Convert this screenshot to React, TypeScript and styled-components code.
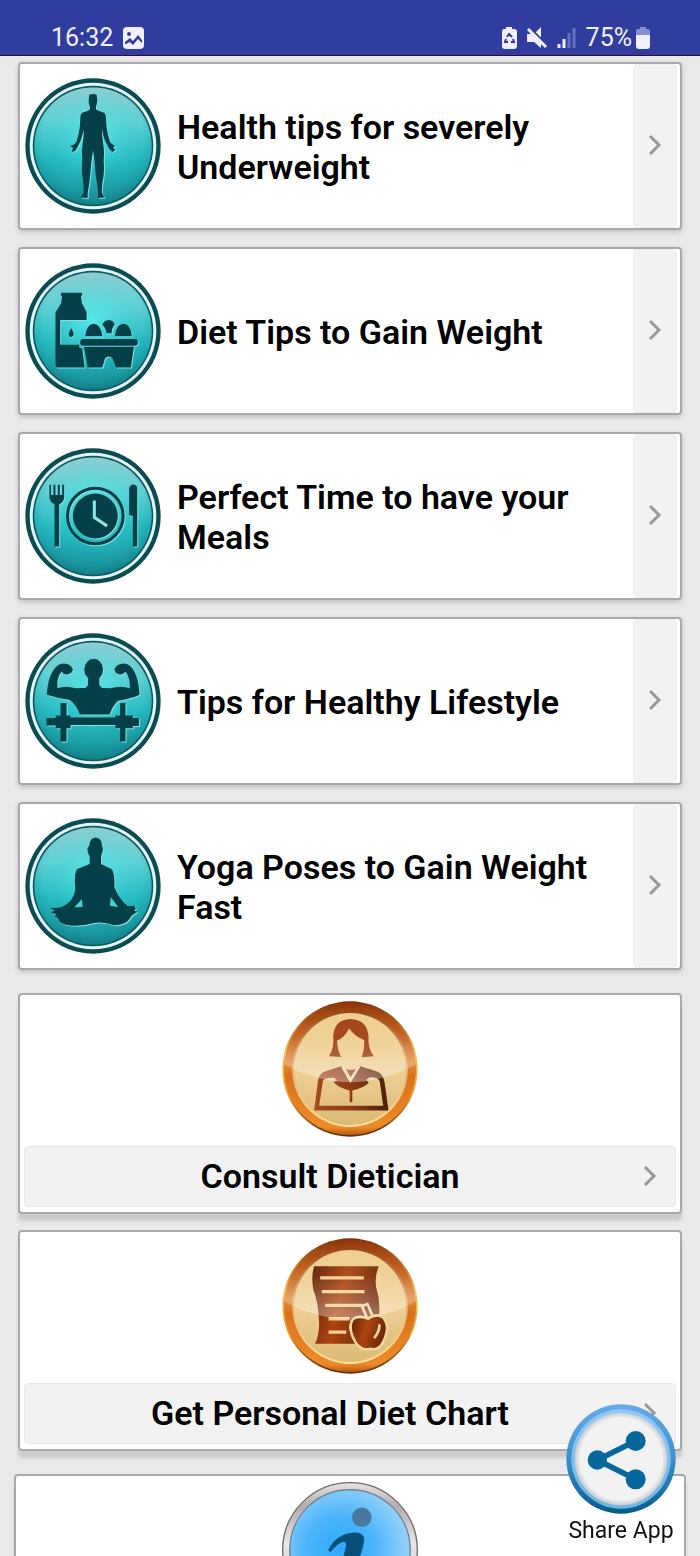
import React, { useId } from "react";
import styled, { createGlobalStyle } from "styled-components";

const GlobalStyle = createGlobalStyle`
  *, *::before, *::after { box-sizing: border-box; }
  body {
    margin: 0;
    background: #e9e9ea;
    color: #000;
    font-family: Roboto, "Noto Sans", sans-serif;
  }
`;

const Screen = styled.div`
  display: flex;
  flex-direction: column;
  height: 100vh;
  overflow: hidden;
`;

const StatusBar = styled.header`
  display: flex;
  flex: none;
  align-items: center;
  justify-content: space-between;
  height: 56px;
  padding: 20px 49px 0 51px;
  border-bottom: 1px solid #3a0a30;
  background: #303d9e;
  color: #f0f0ff;
  font-size: 25px;
  line-height: 36px;
`;

const StatusGroup = styled.div<{ $gap: number }>`
  display: flex;
  align-items: center;
  gap: ${(p) => p.$gap}px;
`;

const BatteryLevel = styled.span`
  display: flex;
  align-items: center;
  gap: 3px;
`;

const Content = styled.main`
  flex: 1;
  min-height: 0;
  padding: 6px 18px 0;
  overflow-y: auto;
  scrollbar-width: none;
`;

const CardList = styled.nav<{ $gap: number }>`
  display: flex;
  flex-direction: column;
  gap: ${(p) => p.$gap}px;
  margin-bottom: 23px;
`;

const Card = styled.a`
  display: flex;
  border: 2px solid #a8a9ae;
  border-radius: 4px;
  background: #fff;
  color: inherit;
  text-decoration: none;
`;

const TopicCard = styled(Card)`
  align-items: center;
  min-height: 168px;
  padding: 0 3px 0 5px;
  box-shadow: 0 2px 5px rgba(0, 0, 0, 0.18);
`;

const TopicTitle = styled.span`
  flex: 1;
  padding: 2px 16px 0;
  font-size: 34px;
  font-weight: 600;
  line-height: 40px;
`;

const ArrowCell = styled.span`
  display: flex;
  align-self: stretch;
  align-items: center;
  justify-content: center;
  width: 44px;
  padding-bottom: 2px;
  border: 1px solid #eeeef0;
  border-radius: 4px;
  background: #f2f2f2;
`;

const ServiceCard = styled(Card)`
  flex-direction: column;
  align-items: center;
  gap: 9px;
  min-height: 221px;
  padding: 6px 4px 5px;
  box-shadow: 0 7px 3px rgba(0, 0, 0, 0.12);
`;

const ServiceBar = styled.span`
  display: flex;
  align-items: center;
  align-self: stretch;
  height: 61px;
  padding: 0 18px 2px 0;
  border: 1px solid #e9e9eb;
  border-radius: 4px;
  background: #f2f2f2;
`;

const ServiceTitle = styled.span`
  flex: 1;
  padding-right: 8px;
  font-size: 34px;
  font-weight: 600;
  line-height: 40px;
  text-align: center;
`;

const InfoCard = styled(ServiceCard)`
  margin: 0 -4px;
`;

const BadgeSvg = styled.svg`
  display: block;
  flex: none;
  width: 136px;
  height: 136px;
`;

const Silhouette = styled.g`
  fill: #053f47;
  filter: drop-shadow(3px 3px 0 #7fe3e3);
`;

const ShareButton = styled.button`
  position: fixed;
  right: 24px;
  bottom: 11px;
  display: flex;
  flex-direction: column;
  align-items: center;
  padding: 0;
  border: 0;
  background: none;
  color: #111;
  font-family: inherit;
  font-size: 23px;
  line-height: 28px;
  cursor: pointer;
`;

const ShareIcon = styled.svg`
  display: block;
  width: 110px;
  height: 110px;
  margin-bottom: 3px;
`;

function Chevron() {
  return (
    <svg width="14" height="22" viewBox="0 0 14 22" aria-hidden="true">
      <path d="M2 2L11 11L2 20" fill="none" stroke="#999" strokeWidth="3" />
    </svg>
  );
}

type BadgeProps = { children: React.ReactNode };

function TealBadge({ children }: BadgeProps) {
  const id = useId();
  return (
    <BadgeSvg viewBox="44 68 406 406" aria-hidden="true">
      <defs>
        <linearGradient id={id + "v"} x1="0" y1="0" x2="0" y2="1">
          <stop offset="0" stopColor="#a8cfd3" />
          <stop offset="0.3" stopColor="#6ad3d7" />
          <stop offset="0.6" stopColor="#22b7bd" />
          <stop offset="1" stopColor="#14858e" />
        </linearGradient>
        <radialGradient id={id + "g"} cx="0.5" cy="0.42" r="0.6">
          <stop offset="0" stopColor="#58f2f3" stopOpacity="0.75" />
          <stop offset="0.7" stopColor="#2cc6ca" stopOpacity="0.2" />
          <stop offset="1" stopColor="#0d6b75" stopOpacity="0.5" />
        </radialGradient>
      </defs>
      <circle cx="247" cy="271" r="202" fill="#0b4b52" />
      <circle cx="247" cy="271" r="189" fill="#e2f5fa" />
      <circle cx="247" cy="271" r="180" fill="#0b5961" />
      <circle cx="247" cy="271" r="175" fill={`url(#${id}v)`} />
      <circle cx="247" cy="271" r="175" fill={`url(#${id}g)`} />
      <Silhouette>{children}</Silhouette>
    </BadgeSvg>
  );
}

function BodyGlyph() {
  return (
    <path
      transform="translate(0 14)"
      d="M236 104Q247 99 258 104L260 122Q258 134 256 139L256 148Q266 154 280 158Q286 162 286 178L288 205Q291 225 298 245L304 252L314 257L307 259L313 270L305 275Q295 268 291 256Q280 240 277 222L274 208Q273 225 277 245Q282 270 279 300Q281 330 278 350Q272 380 274 397L281 411L262 412Q263 395 260 375Q254 345 253 320Q251 290 247 270Q244 290 241 315Q239 345 235 375Q230 395 231 412L210 411L219 397Q220 380 216 350Q212 330 215 300Q212 270 217 245Q221 225 219 208L216 222Q212 240 203 256L194 272L184 275L187 262L179 257L192 252L198 243Q204 225 207 205Q209 190 209 178Q209 162 215 158Q230 154 238 148L238 139Q234 132 234 122Z"
    />
  );
}

function FoodGlyph() {
  return (
    <>
      <path d="M153 157H213Q217 162 213 167H211L214 188L228 214V238H149V312H206V320L215 324L222 380H142Q135 380 135 370V216L152 188L155 167H153Q149 162 153 157Z" />
      <path d="M182 262Q172 278 176 285Q182 293 188 285Q192 278 182 262Z" />
      <path d="M224 287Q227 250 249 249Q271 250 275 287Z" />
      <path d="M312 287Q316 250 338 249Q360 250 363 287Z" />
      <path d="M275 252Q280 239 294 238Q308 239 312 252Q302 262 303 278H287Q286 262 275 252Z" />
      <rect x="209" y="295" width="172" height="20" rx="9" />
      <path d="M220 318H369L360 380H316L305 352Q294 342 283 352L275 380H232Z" />
    </>
  );
}

function MealTimeGlyph() {
  return (
    <>
      <path d="M117 178H122V208H129V178H135V208H142V178H148V208H155V178H161V214Q161 228 146 236V362H132V236Q117 228 117 214Z" />
      <circle cx="254" cy="271" r="83" fill="none" stroke="#053f47" strokeWidth="9" />
      <circle cx="254" cy="271" r="67" />
      <path d="M251 225V275L289 301" fill="none" stroke="#8be9ea" strokeWidth="9" />
      <path d="M355 188Q358 177 368 177Q379 178 379 190V362H366V272L355 268Z" />
    </>
  );
}

function FitnessGlyph() {
  return (
    <>
      <ellipse cx="249" cy="177" rx="28" ry="32" />
      <path d="M109 252Q112 205 128 180Q142 158 160 159Q180 160 187 176Q186 188 172 191Q162 194 153 184Q138 200 141 233Q165 224 195 233L224 232L232 224V195H266V224L274 232L300 233Q330 224 357 233Q358 200 344 184Q335 194 325 191Q312 188 311 176Q318 160 338 159Q358 160 370 182Q384 208 386 252Q360 264 322 270Q305 285 297 311H208Q195 280 178 268Q140 262 109 252Z" />
      <path d="M108 322H136V314H150V277H168V314H180V320H314V314H328V277H344V314H366V322H384V346H366V352H344V392H328V352H314V343H180V352H168V392H150V352H136V344H108Z" />
    </>
  );
}

function YogaGlyph() {
  return (
    <>
      <path d="M236 150Q237 127 255 126Q273 127 274 150L277 162Q274 175 271 182V205Q285 212 302 220Q312 228 311 275Q324 308 350 331L370 330L375 338L370 345L380 348L362 360Q352 378 340 382Q322 390 308 388Q280 378 255 381Q225 389 195 390Q160 390 148 378Q144 366 132 362L137 357L122 350L132 345L120 337L145 336Q165 332 182 313Q196 290 194 275Q190 230 200 220Q225 210 237 205V182Q231 175 230 160Z" />
      <path d="M214 310L216 333L191 335Z" fill="#45d5d8" />
      <path d="M300 304L298 330L322 334Z" fill="#45d5d8" />
    </>
  );
}

function AmberBadge({ children }: BadgeProps) {
  const id = useId();
  return (
    <BadgeSvg viewBox="66 48 406 406" aria-hidden="true">
      <defs>
        <linearGradient id={id + "r"} x1="0" y1="0" x2="0" y2="1">
          <stop offset="0" stopColor="#8d3508" />
          <stop offset="0.2" stopColor="#bd5514" />
          <stop offset="0.45" stopColor="#e38b42" />
          <stop offset="0.55" stopColor="#d9711c" />
          <stop offset="0.94" stopColor="#ee8b29" />
          <stop offset="1" stopColor="#b85a12" />
        </linearGradient>
        <linearGradient id={id + "e"} x1="0" y1="0" x2="0" y2="1">
          <stop offset="0" stopColor="#7b2e08" />
          <stop offset="0.4" stopColor="#f4c343" />
          <stop offset="0.7" stopColor="#ef9b2b" />
          <stop offset="1" stopColor="#5e2a08" />
        </linearGradient>
        <linearGradient id={id + "f"} x1="0" y1="0" x2="0" y2="1">
          <stop offset="0" stopColor="#efcd8b" />
          <stop offset="0.5" stopColor="#efd096" />
          <stop offset="1" stopColor="#dcb975" />
        </linearGradient>
        <linearGradient id={id + "b"} x1="0" y1="0" x2="0" y2="1">
          <stop offset="0" stopColor="#8e4414" />
          <stop offset="0.4" stopColor="#dca868" />
          <stop offset="1" stopColor="#ffe297" />
        </linearGradient>
        <linearGradient id={id + "s"} x1="0" y1="0" x2="0" y2="1">
          <stop offset="0" stopColor="#fff" stopOpacity="0" />
          <stop offset="0.5" stopColor="#fff" stopOpacity="0.06" />
          <stop offset="1" stopColor="#fff" stopOpacity="0.36" />
        </linearGradient>
      </defs>
      <circle cx="269" cy="251" r="202" fill={`url(#${id}e)`} />
      <circle cx="269" cy="251" r="197" fill={`url(#${id}r)`} />
      <circle cx="269" cy="251" r="173" fill={`url(#${id}b)`} />
      <circle cx="269" cy="251" r="167" fill={`url(#${id}f)`} />
      {children}
      <path
        d="M72 237A197 197 0 0 1 466 237Q370 290 269 290Q168 290 72 237Z"
        fill={`url(#${id}s)`}
      />
    </BadgeSvg>
  );
}

function DieticianGlyph() {
  const id = useId();
  return (
    <>
      <defs>
        <linearGradient id={id + "d"} x1="0" y1="0" x2="1" y2="0">
          <stop offset="0" stopColor="#a8481c" />
          <stop offset="0.5" stopColor="#8f3c16" />
          <stop offset="1" stopColor="#482008" />
        </linearGradient>
      </defs>
      <path
        d="M206 213Q222 190 219 150Q224 104 270 102Q318 104 324 150Q322 190 340 213L304 216Q313 190 312 165Q285 155 266 130Q252 158 230 167Q232 195 242 215Z"
        fill="#a24012"
      />
      <path
        fillRule="evenodd"
        d="M162 375L174 282Q178 262 200 256L244 243L270 290L299 243L346 257Q368 264 372 290L384 375ZM177 361L188 287Q190 276 222 277L230 285L220 290Q235 308 268 315V350H276V315Q310 308 325 292L317 283L329 276Q355 275 358 290L368 361Z"
        fill={`url(#${id}d)`}
      />
      <path d="M257 251Q271 257 287 251L271 276Z" fill="#9a421a" />
      <path d="M246 244L270 286L296 244" fill="none" stroke="#f3dcae" strokeWidth="7" />
    </>
  );
}

function DietChartGlyph() {
  const id = useId();
  return (
    <g transform="translate(0 9)">
      <defs>
        <linearGradient id={id + "p"} x1="0" y1="0" x2="1" y2="0.3">
          <stop offset="0" stopColor="#5e1e05" />
          <stop offset="0.5" stopColor="#ac4510" />
          <stop offset="1" stopColor="#6e2608" />
        </linearGradient>
      </defs>
      <path
        d="M162 123H355Q342 155 347 185Q362 235 354 280L290 355H165Q180 320 176 280Q174 230 160 195Q152 155 162 123Z"
        fill={`url(#${id}p)`}
      />
      <path
        d="M180 158H310M185 199H312M195 240H310M205 280H268M205 320H258"
        stroke="#f3cf92"
        strokeWidth="10"
      />
      <path d="M311 236L327 272" stroke="#f3d49a" strokeWidth="26" />
      <path d="M315 243L327 272" stroke="#85300b" strokeWidth="9" />
      <path
        d="M323 280Q348 262 368 276Q390 302 370 345Q355 378 330 370Q302 378 285 350Q262 310 275 285Q292 266 323 280Z"
        fill={`url(#${id}p)`}
        stroke="#f3d49a"
        strokeWidth="8"
      />
      <path
        d="M357 300Q356 320 343 335"
        fill="none"
        stroke="#f3d49a"
        strokeWidth="8"
        strokeLinecap="round"
      />
    </g>
  );
}

function InfoBadge() {
  const id = useId();
  return (
    <BadgeSvg viewBox="848 155 404 404" aria-hidden="true">
      <defs>
        <linearGradient id={id + "r"} x1="0" y1="0" x2="0" y2="1">
          <stop offset="0" stopColor="#e8e4e2" />
          <stop offset="0.18" stopColor="#b3acb0" />
          <stop offset="0.45" stopColor="#e8e6ea" />
          <stop offset="1" stopColor="#b5b5ba" />
        </linearGradient>
        <radialGradient id={id + "f"} cx="0.42" cy="0.5" r="0.55">
          <stop offset="0" stopColor="#2fa8fb" />
          <stop offset="0.5" stopColor="#49b4fb" />
          <stop offset="1" stopColor="#8fd0f9" />
        </radialGradient>
      </defs>
      <circle cx="1050" cy="357" r="200" fill={`url(#${id}r)`} stroke="#6f6c6a" strokeWidth="4" />
      <circle cx="1050" cy="357" r="179" fill={`url(#${id}f)`} stroke="#718490" strokeWidth="4" />
      <circle cx="1085" cy="260" r="29" fill="#49799f" />
      <path
        d="M985 358Q1008 310 1060 305Q1092 302 1092 327Q1090 350 1076 385L1052 462Q1070 455 1084 434L1090 440Q1066 480 1032 482Q1006 480 1012 452L1038 345Q1040 328 1026 334Q1008 342 993 363Z"
        fill="#064f7b"
      />
    </BadgeSvg>
  );
}

function ShareGlyph() {
  return (
    <ShareIcon viewBox="80 72 330 330" aria-hidden="true">
      <defs>
        <linearGradient id="share-ring" x1="0" y1="0" x2="0" y2="1">
          <stop offset="0" stopColor="#68abeb" />
          <stop offset="0.5" stopColor="#3c8fcb" />
          <stop offset="1" stopColor="#045b8c" />
        </linearGradient>
        <linearGradient id="share-rim" x1="0" y1="0" x2="0" y2="1">
          <stop offset="0" stopColor="#8fc9fb" />
          <stop offset="1" stopColor="#71b6dd" />
        </linearGradient>
        <radialGradient id="share-face" cx="0.5" cy="0.5" r="0.5">
          <stop offset="0.88" stopColor="#f2f2f3" />
          <stop offset="1" stopColor="#c7ccd2" />
        </radialGradient>
      </defs>
      <circle cx="245" cy="237" r="164" fill="url(#share-ring)" />
      <circle cx="245" cy="237" r="149" fill="url(#share-rim)" />
      <circle cx="245" cy="237" r="139" fill="url(#share-face)" />
      <g fill="#05679c">
        <path d="M289 183L174 240L289 298" fill="none" stroke="#05679c" strokeWidth="17" />
        <circle cx="174" cy="240" r="29" />
        <circle cx="289" cy="183" r="30" />
        <circle cx="289" cy="298" r="30" />
      </g>
    </ShareIcon>
  );
}

function PictureIcon() {
  return (
    <svg width="22" height="22" viewBox="0 0 22 22" aria-hidden="true">
      <rect x="1" y="0" width="21" height="22" rx="4" fill="#f0f0ff" />
      <circle cx="7" cy="7" r="2" fill="#303d9e" />
      <path d="M3 17V15L8 11L11 14L16 8L20 13V16L16 12L11 18L8 15L4 17Z" fill="#303d9e" />
    </svg>
  );
}

function BatterySaverIcon() {
  return (
    <svg width="16" height="22" viewBox="0 0 16 22" aria-hidden="true">
      <path
        d="M5 0H11V2H13Q16 2 16 5V19Q16 22 13 22H4Q1 22 1 19V5Q1 2 3 2H5Z"
        fill="#f0f0ff"
      />
      <path
        d="M6 10L8 7L11 10M12 12L13 15H10M7 15H4L5 12"
        fill="none"
        stroke="#303d9e"
        strokeWidth="2"
      />
    </svg>
  );
}

function MutedIcon() {
  return (
    <svg width="22" height="22" viewBox="0 0 22 22" aria-hidden="true">
      <path d="M1 7H8L15 0V21L8 15H1Z" fill="#f0f0ff" />
      <path d="M3 0L22 19" stroke="#303d9e" strokeWidth="2" />
      <path d="M2 2L20 20" stroke="#f0f0ff" strokeWidth="3" />
    </svg>
  );
}

function SignalIcon() {
  return (
    <svg width="20" height="20" viewBox="0 0 20 20" aria-hidden="true">
      <path d="M2 16V20M7 11V20" stroke="#f0f0ff" strokeWidth="3" />
      <path d="M12 5V20M17 0V20" stroke="#6672be" strokeWidth="3" />
    </svg>
  );
}

function BatteryIcon() {
  return (
    <svg width="16" height="22" viewBox="0 0 16 22" aria-hidden="true">
      <path d="M5 0H11V2H13Q15 2 15 4V8H1V4Q1 2 3 2H5Z" fill="#858ed0" />
      <path d="M1 8H15V19Q15 22 12 22H4Q1 22 1 19Z" fill="#f0f0ff" />
    </svg>
  );
}

const topics = [
  { title: "Health tips for severely Underweight", Glyph: BodyGlyph },
  { title: "Diet Tips to Gain Weight", Glyph: FoodGlyph },
  { title: "Perfect Time to have your Meals", Glyph: MealTimeGlyph },
  { title: "Tips for Healthy Lifestyle", Glyph: FitnessGlyph },
  { title: "Yoga Poses to Gain Weight Fast", Glyph: YogaGlyph },
];

const services = [
  { title: "Consult Dietician", Glyph: DieticianGlyph },
  { title: "Get Personal Diet Chart", Glyph: DietChartGlyph },
];

export default function App() {
  return (
    <Screen>
      <GlobalStyle />
      <StatusBar>
        <StatusGroup $gap={9}>
          <time>16:32</time>
          <PictureIcon />
        </StatusGroup>
        <StatusGroup $gap={9}>
          <BatterySaverIcon />
          <MutedIcon />
          <SignalIcon />
          <BatteryLevel>
            75%
            <BatteryIcon />
          </BatteryLevel>
        </StatusGroup>
      </StatusBar>
      <Content>
        <CardList $gap={17} aria-label="Topics">
          {topics.map(({ title, Glyph }) => (
            <TopicCard href="#" key={title}>
              <TealBadge>
                <Glyph />
              </TealBadge>
              <TopicTitle>{title}</TopicTitle>
              <ArrowCell>
                <Chevron />
              </ArrowCell>
            </TopicCard>
          ))}
        </CardList>
        <CardList $gap={16} aria-label="Services">
          {services.map(({ title, Glyph }) => (
            <ServiceCard href="#" key={title}>
              <AmberBadge>
                <Glyph />
              </AmberBadge>
              <ServiceBar>
                <ServiceTitle>{title}</ServiceTitle>
                <Chevron />
              </ServiceBar>
            </ServiceCard>
          ))}
        </CardList>
        <InfoCard href="#" aria-label="Information">
          <InfoBadge />
        </InfoCard>
      </Content>
      <ShareButton type="button">
        <ShareGlyph />
        Share App
      </ShareButton>
    </Screen>
  );
}
